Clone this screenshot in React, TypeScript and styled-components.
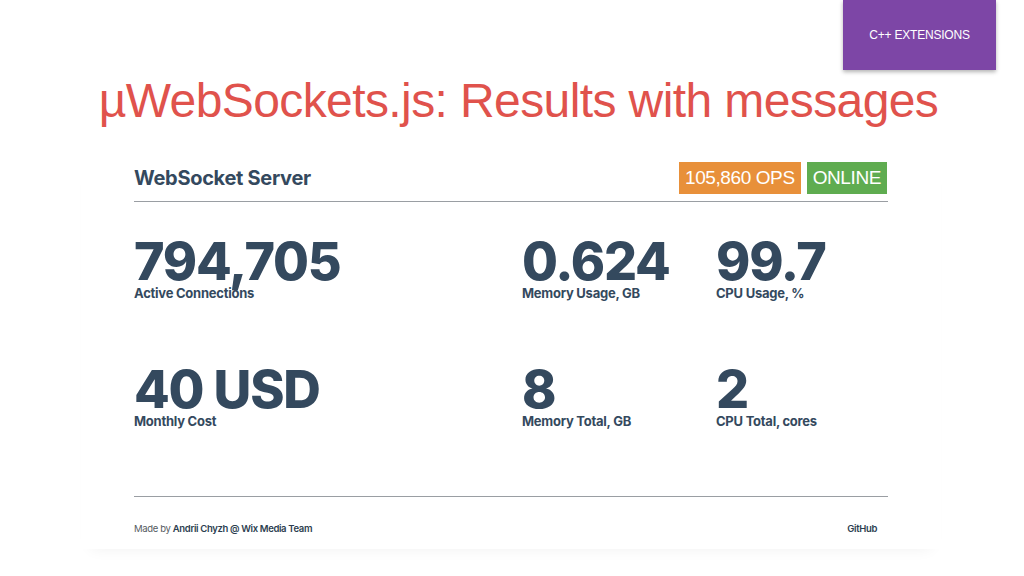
import { FC } from 'react';
import styled, { createGlobalStyle } from 'styled-components';

interface IStat {
	value: string;
	label: string;
}

const stats: IStat[] = [
	{value: '794,705', label: 'Active Connections'},
	{value: '0.624', label: 'Memory Usage, GB'},
	{value: '99.7', label: 'CPU Usage, %'},
	{value: '40 USD', label: 'Monthly Cost'},
	{value: '8', label: 'Memory Total, GB'},
	{value: '2', label: 'CPU Total, cores'},
];

const App: FC = () => {
	return (
		<>
			<GlobalStyle/>
			<SlideComponent>
				<TagComponent>C++ EXTENSIONS</TagComponent>
				<TitleComponent>µWebSockets.js: Results with messages</TitleComponent>
				<PanelComponent>
					<HeaderComponent>
						<HeaderTitleComponent>WebSocket Server</HeaderTitleComponent>
						<BadgeGroupComponent>
							<BadgeComponent color="#e8903a">105,860 OPS</BadgeComponent>
							<BadgeComponent color="#5fac50">ONLINE</BadgeComponent>
						</BadgeGroupComponent>
					</HeaderComponent>
					<StatsGridComponent>
						{stats.map((stat) => (
							<StatComponent key={stat.label}>
								<StatValueComponent>{stat.value}</StatValueComponent>
								<StatLabelComponent>{stat.label}</StatLabelComponent>
							</StatComponent>
						))}
					</StatsGridComponent>
					<FooterComponent>
						<span>Made by <strong>Andrii Chyzh @ Wix Media Team</strong></span>
						<strong>GitHub</strong>
					</FooterComponent>
				</PanelComponent>
			</SlideComponent>
		</>
	);
};

export default App;

const GlobalStyle = createGlobalStyle`
	html, body {
		margin: 0;
		padding: 0;
		background: #ffffff;
	}
`

const SlideComponent = styled.div`
	position: relative;
	width: 1024px;
	height: 576px;
	overflow: hidden;
	background: #ffffff;
	display: flex;
	flex-direction: column;
	align-items: center;
	font-family: Inter, "Liberation Sans", sans-serif;
`

const TagComponent = styled.div`
	position: absolute;
	top: 0;
	left: 843px;
	width: 153px;
	height: 70px;
	display: flex;
	align-items: center;
	justify-content: center;
	background: #7d46a6;
	color: #ffffff;
	font-family: "Liberation Sans", sans-serif;
	font-size: 12px;
	letter-spacing: -0.2px;
	box-shadow: 0 2px 4px rgba(0, 0, 0, 0.3);
`

const TitleComponent = styled.h1`
	margin: 73px 0 0 13px;
	font-family: "Liberation Sans", sans-serif;
	font-weight: 400;
	font-size: 48px;
	line-height: 56px;
	letter-spacing: -0.6px;
	color: #e0524c;
`

const PanelComponent = styled.div`
	width: 754px;
	margin: 26px 0 0 -2px;
	padding: 0 53px;
	box-shadow: 0 10px 14px -10px rgba(0, 0, 0, 0.06);
	color: #34495e;
`

const HeaderComponent = styled.div`
	display: flex;
	justify-content: space-between;
	align-items: center;
	padding: 7px 1px 7px 0;
	border-bottom: 1px solid #9a9ea3;
`

const HeaderTitleComponent = styled.div`
	font-size: 20px;
	font-weight: 700;
	letter-spacing: -0.3px;
`

const BadgeGroupComponent = styled.div`
	display: flex;
	gap: 6px;
`

const BadgeComponent = styled.div<{ color: string }>`
	height: 32px;
	padding: 0 6px;
	display: flex;
	align-items: center;
	background: ${(p) => p.color};
	color: #ffffff;
	font-family: "Liberation Sans", sans-serif;
	font-size: 19px;
	letter-spacing: -0.4px;
`

const StatsGridComponent = styled.div`
	display: grid;
	grid-template-columns: 388px 194px 1fr;
	grid-auto-rows: 128px;
	padding-top: 36px;
	height: 258px;
	border-bottom: 1px solid #9a9ea3;
`

const StatComponent = styled.div`
	display: flex;
	flex-direction: column;
`

const StatValueComponent = styled.div`
	font-size: 52px;
	font-weight: 800;
	line-height: 47px;
	letter-spacing: -1.2px;
`

const StatLabelComponent = styled.div`
	font-size: 13px;
	font-weight: 700;
	line-height: 16px;
	letter-spacing: -0.25px;
`

const FooterComponent = styled.div`
	display: flex;
	justify-content: space-between;
	align-items: center;
	padding: 26px 11px 15px 0;
	font-size: 9.5px;
	letter-spacing: -0.35px;
	color: #555b61;

	strong {
		font-weight: 600;
		color: #2c3e50;
	}
`
